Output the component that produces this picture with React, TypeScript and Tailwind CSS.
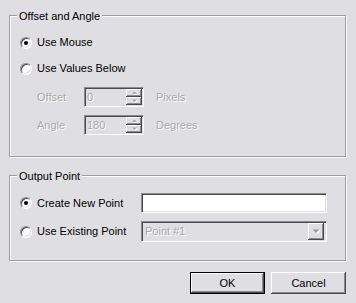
const sunken =
  "border border-t-[#8b8b8f] border-l-[#8b8b8f] border-b-white border-r-white shadow-[inset_1px_1px_0_#4b4b4f,inset_-1px_-1px_0_#dfdfe3]";
const raised =
  "shadow-[inset_-1px_-1px_0_#4b4b4f,inset_1px_1px_0_#ffffff,inset_-2px_-2px_0_#8b8b8f]";
const disabledText = "text-[#a8a7ab] [text-shadow:1px_1px_0_#ffffff]";

function Radio({ checked }: { checked?: boolean }) {
  return (
    <span className="flex h-[12px] w-[12px] shrink-0 items-center justify-center rounded-full border border-t-[#8b8b8f] border-l-[#8b8b8f] border-b-white border-r-white bg-white shadow-[inset_1px_1px_0_#4b4b4f,inset_-1px_-1px_0_#dfdfe3]">
      {checked && <span className="h-[4px] w-[4px] rounded-full bg-black" />}
    </span>
  );
}

function Arrow({ up }: { up?: boolean }) {
  return (
    <svg width="7" height="4" viewBox="0 0 7 4">
      <polygon points={up ? "3.5,1 6,3.5 1,3.5" : "1,1 6,1 3.5,3.5"} fill="#ffffff" transform="translate(1,0.5)" />
      <polygon points={up ? "3.5,0.5 6,3 1,3" : "1,0.5 6,0.5 3.5,3"} fill="#a8a7ab" />
    </svg>
  );
}

function DropArrow() {
  return (
    <svg width="9" height="6" viewBox="0 0 9 6">
      <polygon points="1.5,1.5 8.5,1.5 5,5" fill="#ffffff" />
      <polygon points="0.5,0.5 7.5,0.5 4,4" fill="#9d9ca1" />
    </svg>
  );
}

function Spinner({ value }: { value: string }) {
  return (
    <div className={`flex h-[20px] w-[60px] bg-[#dfdfe3] py-[1px] pl-[2px] pr-[1px] ${sunken}`}>
      <span className={`flex-1 leading-[16px] ${disabledText}`}>{value}</span>
      <div className="flex w-[16px] flex-col">
        <span className={`flex h-[8px] items-center justify-center bg-[#dfdfe3] ${raised}`}>
          <Arrow up />
        </span>
        <span className={`flex h-[8px] items-center justify-center bg-[#dfdfe3] ${raised}`}>
          <Arrow />
        </span>
      </div>
    </div>
  );
}

function Group({ title, className, children }: { title: string; className: string; children: React.ReactNode }) {
  return (
    <div
      className={`relative border border-[#9d9da1] shadow-[1px_1px_0_#ffffff,inset_1px_1px_0_#ffffff] ${className}`}
    >
      <span className="absolute -top-[6px] left-[7px] bg-[#dfdfe3] px-[2px] leading-[13px] text-black">
        {title}
      </span>
      {children}
    </div>
  );
}

export default function App() {
  return (
    <div className="h-[303px] w-[356px] bg-[#dfdfe3] pl-[9px] pr-[10px] pt-[15px] font-['Liberation_Sans',Arial,sans-serif] text-[11px] leading-[13px] text-black">
      {/* Offset and Angle */}
      <Group title="Offset and Angle" className="h-[142px] pl-[10px] pt-[20px]">
        <label className="flex h-[13px] items-center gap-[5px]">
          <Radio checked />
          <span>Use Mouse</span>
        </label>
        <label className="mt-[13px] flex h-[13px] items-center gap-[5px]">
          <Radio />
          <span>Use Values Below</span>
        </label>
        <div className="ml-[17px] mt-[12px] flex items-center">
          <span className={`w-[47px] ${disabledText}`}>Offset</span>
          <Spinner value="0" />
          <span className={`ml-[12px] ${disabledText}`}>Pixels</span>
        </div>
        <div className="ml-[17px] mt-[8px] flex items-center">
          <span className={`w-[47px] ${disabledText}`}>Angle</span>
          <Spinner value="180" />
          <span className={`ml-[12px] ${disabledText}`}>Degrees</span>
        </div>
      </Group>

      {/* Output Point */}
      <Group title="Output Point" className="mt-[18px] h-[86px] pl-[10px] pt-[17px]">
        <div className="flex items-center">
          <label className="flex w-[121px] items-center gap-[5px]">
            <Radio checked />
            <span>Create New Point</span>
          </label>
          <div className={`h-[20px] w-[186px] bg-white ${sunken}`} />
        </div>
        <div className="mt-[8px] flex items-center">
          <label className="flex w-[121px] items-center gap-[5px]">
            <Radio />
            <span>Use Existing Point</span>
          </label>
          <div className={`flex h-[21px] w-[186px] items-center bg-[#dfdfe3] py-[2px] pl-[3px] pr-[2px] ${sunken}`}>
            <span className={`flex-1 ${disabledText}`}>Point #1</span>
            <span className={`flex h-[17px] w-[16px] items-center justify-center bg-[#dfdfe3] ${raised}`}>
              <DropArrow />
            </span>
          </div>
        </div>
      </Group>

      {/* Buttons */}
      <div className="mt-[11px] flex justify-end gap-[6px]">
        <button className={`h-[22px] w-[75px] border border-black bg-[#dfdfe3] ${raised}`}>OK</button>
        <button className={`h-[22px] w-[75px] bg-[#dfdfe3] ${raised}`}>Cancel</button>
      </div>
    </div>
  );
}
